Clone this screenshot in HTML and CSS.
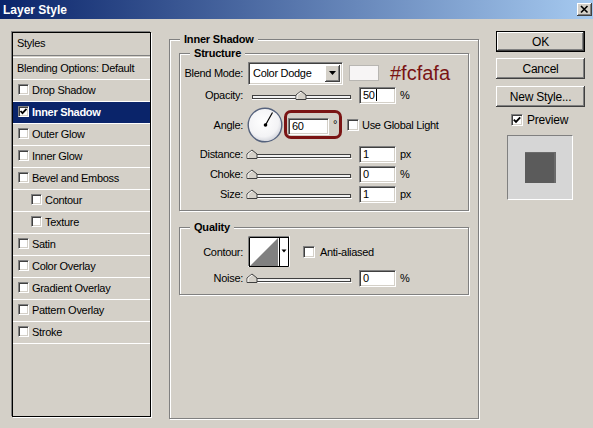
FILE: index.html
```html
<!DOCTYPE html>
<html>
<head>
<meta charset="utf-8">
<title>Layer Style</title>
<link rel="stylesheet" href="styles.css">
</head>
<body>
<div class="titlebar">
  <span class="title">Layer Style</span>
  <div class="close"><svg width="15" height="13" viewBox="0 0 15 13"><path d="M4 3L10.5 9.5M10.5 3L4 9.5" stroke="#000" stroke-width="1.6"/></svg></div>
</div>
<div class="main">
  <div class="stylelist">
    <div class="li head">Styles</div>
    <div class="divider"></div>
    <div class="li text">Blending Options: Default</div>
    <div class="li"><span class="cb"></span>Drop Shadow</div>
    <div class="li sel"><span class="cb"><svg width="9" height="9" viewBox="0 0 9 9"><polyline points="1.5,4 3.5,6.2 7.5,1.8" fill="none" stroke="#000" stroke-width="1.8"/></svg></span>Inner Shadow</div>
    <div class="li"><span class="cb"></span>Outer Glow</div>
    <div class="li"><span class="cb"></span>Inner Glow</div>
    <div class="li"><span class="cb"></span>Bevel and Emboss</div>
    <div class="li sub"><span class="cb"></span>Contour</div>
    <div class="li sub"><span class="cb"></span>Texture</div>
    <div class="li"><span class="cb"></span>Satin</div>
    <div class="li"><span class="cb"></span>Color Overlay</div>
    <div class="li"><span class="cb"></span>Gradient Overlay</div>
    <div class="li"><span class="cb"></span>Pattern Overlay</div>
    <div class="li"><span class="cb"></span>Stroke</div>
  </div>

  <fieldset class="grp outer">
    <legend>Inner Shadow</legend>
    <fieldset class="grp structure">
      <legend>Structure</legend>
      <div class="row r-blend">
        <span class="lbl">Blend Mode:</span>
        <div class="select"><span class="seltext">Color Dodge</span><span class="selbtn"><svg width="7" height="4" viewBox="0 0 7 4"><path d="M0 0H7L3.5 4Z" fill="#000"/></svg></span></div>
        <span class="swatch"></span>
        <span class="hex">#fcfafa</span>
      </div>
      <div class="row r-op">
        <span class="lbl">Opacity:</span>
        <svg class="slider" width="106" height="12" viewBox="0 0 106 12"><rect x="6.5" y="6.5" width="98" height="3" fill="#f2f2f2" stroke="#404040"/><path d="M6 10.5H106" stroke="#fff"/><g transform="translate(55 0)"><polygon points="-5,10.5 -5,6 0,2 5,6 5,10.5" fill="#d4d0c8" stroke="#404040"/><polyline points="-4,10 -4,6.3 0,3" fill="none" stroke="#fff"/></g></svg>
        <div class="field w37">50<span class="caret"></span></div>
        <span class="unit">%</span>
      </div>
      <div class="row r-angle">
        <span class="lbl">Angle:</span>
        <svg class="dial" width="36" height="36" viewBox="0 0 36 36"><defs><radialGradient id="dg" cx="0.45" cy="0.4" r="0.6"><stop offset="0" stop-color="#ffffff"/><stop offset="0.75" stop-color="#f3f3f5"/><stop offset="1" stop-color="#d3d5dc"/></radialGradient></defs><circle cx="18" cy="18" r="16.8" fill="url(#dg)" stroke="#55627d" stroke-width="1.4"/><path d="M18.5 18L25.5 5.5" stroke="#000" stroke-width="1.2"/><circle cx="18.5" cy="18" r="1.8" fill="#000"/></svg>
        <div class="mark">
          <div class="field w41">60</div>
          <span class="deg">°</span>
        </div>
        <span class="cb big"></span>
        <span class="cbl">Use Global Light</span>
      </div>
      <div class="row r-sl">
        <span class="lbl">Distance:</span>
        <svg class="slider" width="106" height="12" viewBox="0 0 106 12"><rect x="6.5" y="6.5" width="98" height="3" fill="#f2f2f2" stroke="#404040"/><path d="M6 10.5H106" stroke="#fff"/><g transform="translate(6 0)"><polygon points="-5,10.5 -5,6 0,2 5,6 5,10.5" fill="#d4d0c8" stroke="#404040"/><polyline points="-4,10 -4,6.3 0,3" fill="none" stroke="#fff"/></g></svg>
        <div class="field w37">1</div>
        <span class="unit">px</span>
      </div>
      <div class="row r-sl">
        <span class="lbl">Choke:</span>
        <svg class="slider" width="106" height="12" viewBox="0 0 106 12"><rect x="6.5" y="6.5" width="98" height="3" fill="#f2f2f2" stroke="#404040"/><path d="M6 10.5H106" stroke="#fff"/><g transform="translate(6 0)"><polygon points="-5,10.5 -5,6 0,2 5,6 5,10.5" fill="#d4d0c8" stroke="#404040"/><polyline points="-4,10 -4,6.3 0,3" fill="none" stroke="#fff"/></g></svg>
        <div class="field w37">0</div>
        <span class="unit">%</span>
      </div>
      <div class="row r-sl">
        <span class="lbl">Size:</span>
        <svg class="slider" width="106" height="12" viewBox="0 0 106 12"><rect x="6.5" y="6.5" width="98" height="3" fill="#f2f2f2" stroke="#404040"/><path d="M6 10.5H106" stroke="#fff"/><g transform="translate(6 0)"><polygon points="-5,10.5 -5,6 0,2 5,6 5,10.5" fill="#d4d0c8" stroke="#404040"/><polyline points="-4,10 -4,6.3 0,3" fill="none" stroke="#fff"/></g></svg>
        <div class="field w37">1</div>
        <span class="unit">px</span>
      </div>
    </fieldset>

    <fieldset class="grp quality">
      <legend>Quality</legend>
      <div class="row r-contour">
        <span class="lbl">Contour:</span>
        <svg class="contour" width="42" height="31" viewBox="0 0 42 31"><rect x="0" y="0" width="42" height="31" fill="#fff"/><path d="M0.5 31V0.5H42" stroke="#808080" fill="none"/><path d="M1.5 30V1.5H41" stroke="#000" fill="none"/><path d="M41.5 0V31M0 30.5H42" stroke="#fff" fill="none"/><polygon points="2,30 30,2 30,30" fill="#808080"/><path d="M31.5 2V30" stroke="#000"/><rect x="32" y="2" width="8" height="28" fill="#fff"/><path d="M40.5 1V30.5H1" stroke="#000" fill="none"/><path d="M33.5 13.5H38.5L36 16.5Z" fill="#000"/></svg>
        <span class="cb big anti"></span>
        <span class="cbl">Anti-aliased</span>
      </div>
      <div class="row r-sl">
        <span class="lbl">Noise:</span>
        <svg class="slider" width="106" height="12" viewBox="0 0 106 12"><rect x="6.5" y="6.5" width="98" height="3" fill="#f2f2f2" stroke="#404040"/><path d="M6 10.5H106" stroke="#fff"/><g transform="translate(6 0)"><polygon points="-5,10.5 -5,6 0,2 5,6 5,10.5" fill="#d4d0c8" stroke="#404040"/><polyline points="-4,10 -4,6.3 0,3" fill="none" stroke="#fff"/></g></svg>
        <div class="field w37">0</div>
        <span class="unit">%</span>
      </div>
    </fieldset>
  </fieldset>

  <div class="side">
    <div class="btn default">OK</div>
    <div class="btn cancel">Cancel</div>
    <div class="btn newstyle">New Style...</div>
    <div class="preview-row"><span class="cb big"><svg width="10" height="10" viewBox="0 0 10 10"><polyline points="1.8,4.6 4,6.8 8.2,2.4" fill="none" stroke="#000" stroke-width="1.9"/></svg></span><span class="cbl">Preview</span></div>
    <div class="preview-box"><div class="preview-sq"></div></div>
  </div>
</div>
</body>
</html>
```

FILE: styles.css
```css
html, body {
  margin: 0;
  padding: 0;
}
body {
  width: 593px;
  height: 428px;
  overflow: hidden;
  background: #d4d0c8;
  font-family: "Liberation Sans", Arial, sans-serif;
  font-size: 11px;
  letter-spacing: -0.3px;
  color: #000;
}

/* title bar */
.titlebar {
  height: 19px;
  background: linear-gradient(to right, #0a246a, #a6caf0);
  display: flex;
  align-items: center;
  justify-content: space-between;
  padding: 0 1px 0 3px;
}
.title {
  color: #fff;
  font-weight: bold;
  font-size: 12px;
  letter-spacing: 0;
}
.close {
  width: 15px;
  height: 13px;
  background: #d4d0c8;
  box-shadow: inset -1px -1px 0 #404040, inset 1px 1px 0 #fff, inset -2px -2px 0 #808080;
}
.close svg { display: block; }

.main {
  display: flex;
  align-items: flex-start;
}

/* styles list */
.stylelist {
  margin: 13px 0 0 12px;
  width: 139px;
  height: 385px;
  box-sizing: border-box;
  border: 1px solid #000;
  box-shadow: -1px -1px 0 #808080, 1px 1px 0 #fff;
  flex: none;
}
.li {
  height: 19px;
  padding-bottom: 2px;
  border-bottom: 1px solid #fff;
  display: flex;
  align-items: center;
  padding-left: 5px;
  white-space: nowrap;
}
.li.head {
  height: 20px;
  border-bottom: none;
  padding-left: 4px;
}
.li.text { padding-left: 4px; }
.divider {
  height: 1px;
  border-top: 1px solid #808080;
  border-bottom: 1px solid #fff;
}
.li.sub { padding-left: 18px; }
.li.sel {
  background: #0a246a;
  color: #fff;
  font-weight: bold;
}
.li .cb { margin-right: 3px; }

/* checkbox */
.cb {
  width: 11px;
  height: 11px;
  box-sizing: border-box;
  background: #fff;
  border: 1px solid;
  border-color: #808080 #fff #fff #808080;
  box-shadow: inset 1px 1px 0 #404040, inset -1px -1px 0 #d4d0c8;
  flex: none;
  display: flex;
  align-items: center;
  justify-content: center;
}
.cb svg { display: block; }
.cb.big { width: 12px; height: 12px; }

/* group boxes */
.grp {
  margin: 0;
  padding: 0;
  border: 1px solid #808080;
  box-shadow: inset 1px 1px 0 #fff, 1px 1px 0 #fff;
  min-width: 0;
}
.grp legend {
  font-weight: bold;
  line-height: 13px;
  padding: 0 4px;
  background: #d4d0c8;
  letter-spacing: -0.2px;
}
.outer {
  margin: 14px 0 0 18px;
  width: 310px;
  height: 386px;
  box-sizing: border-box;
  padding: 1px 9px 0 9px;
  flex: none;
}
.outer > legend { margin-left: 1px; }
.structure { padding: 1px 0 6px 0; }
.structure > legend, .quality > legend { margin-left: 10px; }
.quality { margin-top: 10px; padding: 1px 0 6px 0; }

/* rows */
.row {
  display: flex;
  align-items: center;
  white-space: nowrap;
}
.lbl {
  width: 63px;
  margin-right: 5px;
  text-align: right;
  flex: none;
}
.r-blend { height: 24px; }
.r-op { height: 20px; }
.r-angle { height: 39px; }
.r-sl { height: 20px; }
.r-contour { height: 33px; }

.select {
  width: 95px;
  height: 23px;
  box-sizing: border-box;
  background: #fff;
  border: 1px solid;
  border-color: #808080 #fff #fff #808080;
  box-shadow: inset 1px 1px 0 #404040, inset -1px -1px 0 #d4d0c8;
  display: flex;
  align-items: stretch;
  padding: 2px 2px 2px 2px;
  flex: none;
}
.seltext {
  flex: 1;
  display: flex;
  align-items: center;
  padding-left: 2px;
}
.selbtn {
  width: 15px;
  background: #d4d0c8;
  box-shadow: inset -1px -1px 0 #404040, inset 1px 1px 0 #fff, inset -2px -2px 0 #808080;
  display: flex;
  align-items: center;
  justify-content: center;
}
.selbtn svg { display: block; }
.swatch {
  width: 30px;
  height: 16px;
  box-sizing: border-box;
  margin-left: 6px;
  background: #f7f5f5;
  border: 1px solid #b8b6b2;
  flex: none;
}
.hex {
  margin-left: 11px;
  font-size: 20px;
  letter-spacing: 0;
  color: #7a1414;
}

.slider {
  display: block;
  margin-left: -2px;
  flex: none;
}
.field {
  height: 17px;
  box-sizing: border-box;
  background: #fff;
  border: 1px solid;
  border-color: #808080 #fff #fff #808080;
  box-shadow: inset 1px 1px 0 #404040, inset -1px -1px 0 #d4d0c8;
  padding-left: 3px;
  display: flex;
  align-items: center;
  flex: none;
}
.w37 { width: 37px; margin-left: 7px; }
.w41 { width: 41px; }
.caret {
  display: inline-block;
  width: 1px;
  height: 12px;
  background: #000;
  margin-left: 1px;
}
.unit { margin-left: 4px; }

.dial {
  display: block;
  margin-left: -1px;
  flex: none;
}
.mark {
  width: 58px;
  height: 29px;
  box-sizing: border-box;
  margin-left: 1px;
  border: 3px solid #7a1414;
  border-radius: 7px;
  display: flex;
  align-items: center;
  padding: 3px 0 0 1px;
  flex: none;
}
.deg { margin-left: 4px; margin-top: -4px; }
.r-angle .cb { margin-left: 5px; }
.cbl { margin-left: 3px; }

.contour {
  display: block;
  flex: none;
}
.cb.anti { margin-left: 13px; }
.r-contour .cbl { margin-left: 5px; }

/* right column */
.side {
  margin: 12px 0 0 17px;
  width: 89px;
  flex: none;
}
.btn {
  height: 21px;
  box-sizing: border-box;
  display: flex;
  align-items: center;
  justify-content: center;
  font-size: 12px;
  letter-spacing: -0.2px;
  box-shadow: inset -1px -1px 0 #404040, inset 1px 1px 0 #fff, inset -2px -2px 0 #808080;
}
.btn.default {
  border: 1px solid #000;
}
.btn.cancel { margin-top: 6px; }
.btn.newstyle { margin-top: 7px; }
.preview-row {
  display: flex;
  align-items: center;
  height: 20px;
  margin-top: 3px;
  padding-left: 15px;
  font-size: 12px;
  letter-spacing: -0.2px;
}
.preview-row .cbl { margin-left: 4px; }
.preview-box {
  width: 66px;
  height: 65px;
  box-sizing: border-box;
  margin: 5px 0 0 11px;
  background: #d6d6d6;
  border: 1px solid;
  border-color: #808080 #fff #fff #808080;
  display: flex;
  align-items: center;
  justify-content: center;
}
.preview-sq {
  width: 31px;
  height: 31px;
  background: #5b5b5b;
  box-shadow: inset -2px 1px 0 #6b6b6b;
}
```
